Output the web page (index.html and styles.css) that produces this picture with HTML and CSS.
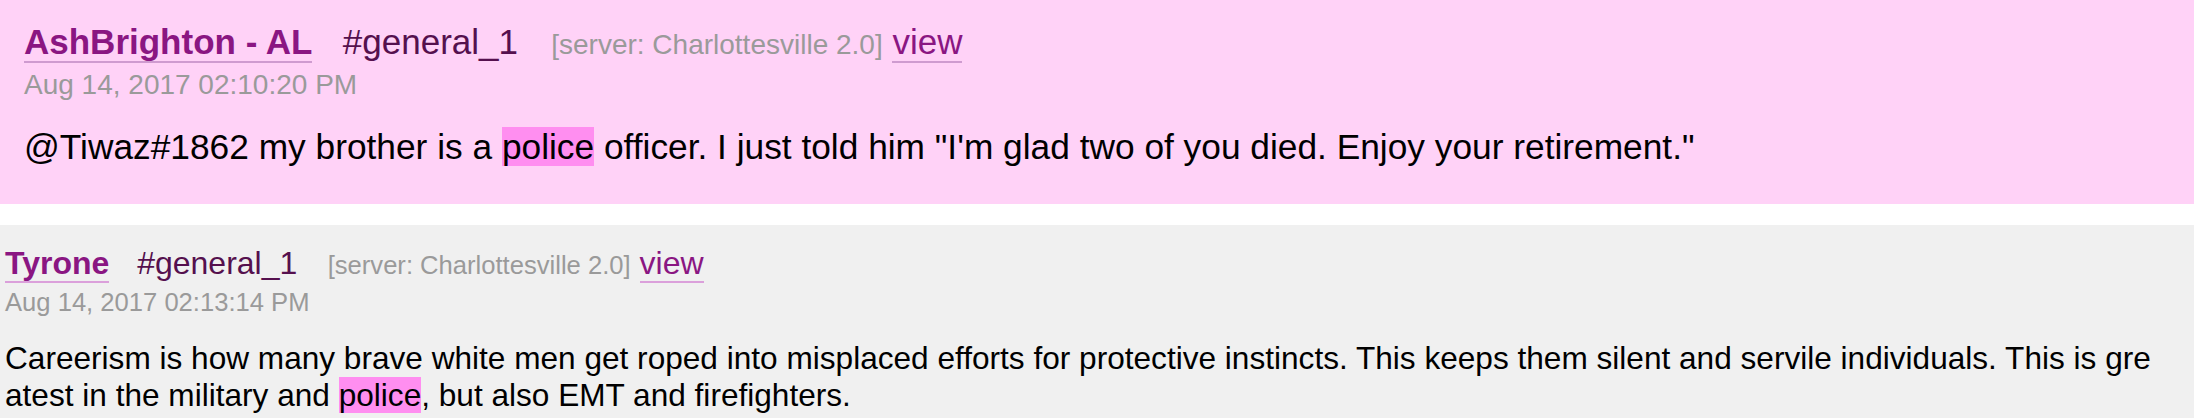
FILE: index.html
```html
<!DOCTYPE html>
<html lang="en">
<head>
<meta charset="utf-8">
<title>Messages</title>
<link rel="stylesheet" href="styles.css">
</head>
<body>
<div class="feed">
  <article class="msg msg--hit">
    <div class="head"><a class="name">AshBrighton - AL</a><span class="channel">#general_1</span><span class="server">[server: Charlottesville 2.0]</span> <a class="view">view</a></div>
    <div class="date">Aug 14, 2017 02:10:20 PM</div>
    <p class="text">@Tiwaz#1862 my brother is a <mark class="hl">police</mark> officer. I just told him "I'm glad two of you died. Enjoy your retirement."</p>
  </article>
  <article class="msg">
    <div class="head"><a class="name">Tyrone</a><span class="channel">#general_1</span><span class="server">[server: Charlottesville 2.0]</span> <a class="view">view</a></div>
    <div class="date">Aug 14, 2017 02:13:14 PM</div>
    <p class="text">Careerism is how many brave white men get roped into misplaced efforts for protective instincts. This keeps them silent and servile individuals. This is greatest in the military and <mark class="hl">police</mark>, but also EMT and firefighters.</p>
  </article>
</div>
</body>
</html>
```
FILE: styles.css
```css
html, body {
  margin: 0;
  padding: 0;
  background: #ffffff;
}

body {
  font-family: "Liberation Sans", Arial, sans-serif;
  color: #000;
}

.feed {
  display: flex;
  flex-direction: column;
  gap: 21px;
}

.msg {
  font-size: 32px;
  background: #f0f0f0;
  padding: 0.625em 38px 1.04em 5px;
}

.msg--hit {
  font-size: 35px;
  background: #ffd2f7;
  padding-left: 24px;
}

.head {
  line-height: 1.15;
  white-space: nowrap;
}

.name {
  font-weight: bold;
  color: #8a1682;
  border-bottom: 2px solid #dba0db;
  margin-right: 0.87em;
  text-decoration: none;
}

.msg--hit .name {
  border-bottom-color: #cf9bd0;
}

.channel {
  color: #55104e;
  margin-right: 0.95em;
}

.server {
  font-size: 0.8em;
  color: #9a9a9a;
}

.view {
  color: #8a1682;
  border-bottom: 2px solid #dba0db;
  text-decoration: none;
}

.msg--hit .view {
  border-bottom-color: #cf9bd0;
}

.date {
  font-size: 0.8em;
  color: #9a9a9a;
  line-height: 1.62;
}

.text {
  font-size: 31.6px;
  margin: 0.55em 0 0 0;
  line-height: 1.15;
  word-break: break-all;
}

.msg--hit .text {
  font-size: 35.3px;
}

.hl {
  background: #ff8ef0;
  color: #000;
}
```
